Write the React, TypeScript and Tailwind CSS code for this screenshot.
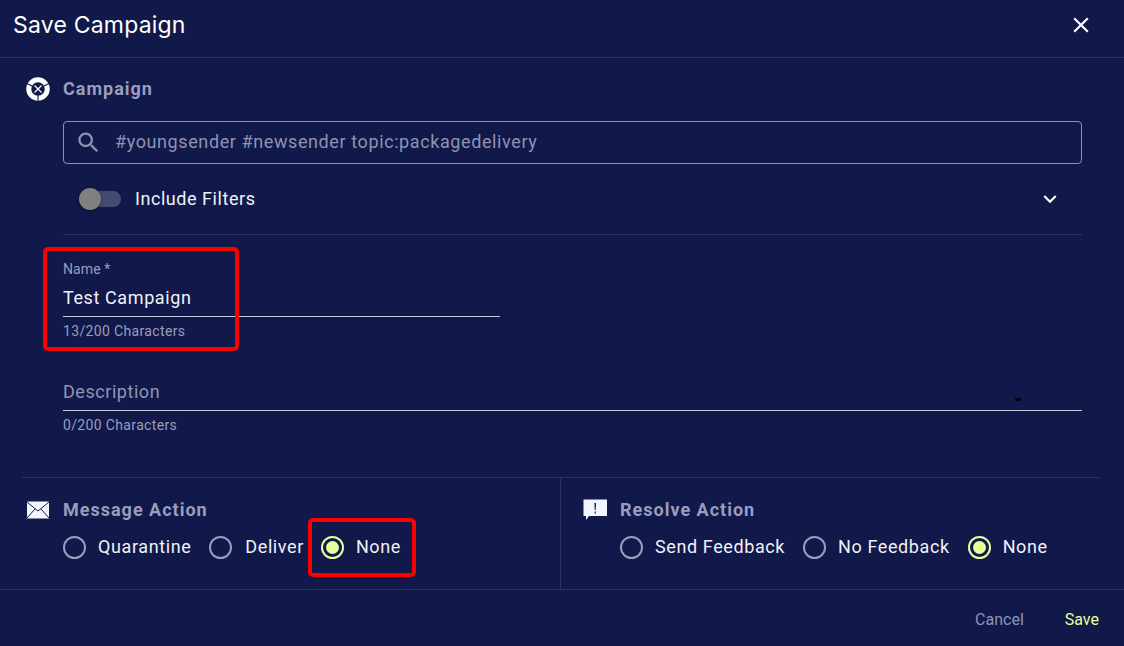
import React from "react";

function Radio({ label, checked, gap }: { label: string; checked?: boolean; gap: string }) {
  return (
    <div className={`flex items-center ${gap}`}>
      <span className={`flex h-[23px] w-[23px] items-center justify-center rounded-full border-2 ${checked ? "border-[#e6ff9c]" : "border-[#9a9dbb]"}`}>
        {checked && <span className="h-[13px] w-[13px] rounded-full bg-[#e6ff9c]" />}
      </span>
      <span className="text-[18px] leading-[24px] tracking-[0.6px] text-[#f0f1f8]">{label}</span>
    </div>
  );
}

export default function App() {
  return (
    <div className="flex h-[646px] w-[1124px] flex-col overflow-hidden bg-[#101949] font-['Roboto',sans-serif]">
      <header className="flex h-[58px] shrink-0 items-center justify-between border-b border-[#2b3360] pb-[7px] pl-[13px] pr-[30px]">
        <h1 className="font-['Inter',sans-serif] text-[23px] font-normal leading-[28px] tracking-[0.2px] text-white">Save Campaign</h1>
        <svg width="26" height="26" viewBox="0 0 24 24" fill="#fff">
          <path d="M19 6.41L17.59 5 12 10.59 6.41 5 5 6.41 10.59 12 5 17.59 6.41 19 12 13.41 17.59 19 19 17.59 13.41 12z" />
        </svg>
      </header>

      <section className="flex h-[419px] shrink-0 flex-col pr-[42px] pl-[26px]">
        <div className="mt-[19px] flex items-center gap-[13px]">
          <svg width="24" height="24" viewBox="0 0 24 24" className="shrink-0">
            <circle cx="12" cy="12" r="9.25" fill="none" stroke="#fff" strokeWidth="5" />
            <path d="M1 6.5 L6.5 9.2 M23 6.5 L17.5 9.2 M12 24 L12 18.5" stroke="#101949" strokeWidth="1.1" />
            <path d="M8.5 8.5 L15.5 15.5 M15.5 8.5 L8.5 15.5" stroke="#fff" strokeWidth="1.2" />
          </svg>
          <h2 className="text-[18px] font-bold leading-[20px] tracking-[1px] text-[#9a9dbd]">Campaign</h2>
        </div>

        <div className="ml-[37px] mt-[20px] flex h-[43px] items-center rounded-[4px] border border-[#8c90b3] pl-[11px]">
          <svg width="27" height="27" viewBox="0 0 24 24" fill="#9094b5">
            <path d="M15.5 14h-.79l-.28-.27C15.41 12.59 16 11.11 16 9.5 16 5.91 13.09 3 9.5 3S3 5.91 3 9.5 5.91 16 9.5 16c1.61 0 3.09-.59 4.23-1.57l.27.28v.79l5 4.99L20.49 19l-4.99-5zm-6 0C7.01 14 5 11.99 5 9.5S7.01 5 9.5 5 14 7.01 14 9.5 11.99 14 9.5 14z" />
          </svg>
          <span className="ml-[13px] pb-[2px] text-[18px] tracking-[0.6px] text-[#8f93b3]">#youngsender #newsender topic:packagedelivery</span>
        </div>

        <div className="ml-[37px] mt-[17px] flex h-[36px] items-center justify-between pl-[16px] pr-[19px]">
          <div className="flex items-center">
            <span className="relative h-[16px] w-[42px] rounded-full bg-[#444b73]">
              <span className="absolute left-0 top-[-3px] h-[22px] w-[22px] rounded-full bg-[#808080] shadow-[0_1px_3px_rgba(0,0,0,0.5)]" />
            </span>
            <span className="ml-[14px] pb-[2px] text-[18px] tracking-[0.55px] text-[#f0f1f8]">Include Filters</span>
          </div>
          <svg width="26" height="26" viewBox="0 0 24 24" fill="#fff">
            <path d="M16.59 8.59L12 13.17 7.41 8.59 6 10l6 6 6-6z" />
          </svg>
        </div>

        <div className="ml-[37px] mt-[17px] h-px bg-[#2b3360]" />

        <div className="relative ml-[37px] mt-[26px] w-[437px]">
          <div className="text-[14px] leading-[16px] tracking-[0.1px] text-[#9a9dbd]">Name *</div>
          <div className="mt-[9px] border-b border-[#c9cbdb] pb-[6px] text-[18px] leading-[24px] tracking-[0.6px] text-[#f0f1f8]">Test Campaign</div>
          <div className="mt-[6px] text-[14px] leading-[16px] tracking-[0.35px] text-[#9a9dbd]">13/200 Characters</div>
          <div className="absolute left-[-20px] top-[-14px] h-[104px] w-[196px] rounded-[5px] border-4 border-[#ff0000]" />
        </div>

        <div className="relative ml-[37px] mt-[41px]">
          <div className="border-b border-[#c9cbdb] pb-[6px] text-[18px] leading-[24px] tracking-[0.55px] text-[#9094b5]">Description</div>
          <div className="mt-[6px] text-[14px] leading-[16px] tracking-[0.35px] text-[#9a9dbd]">0/200 Characters</div>
          <span className="absolute left-[952px] top-[18px] h-[3px] w-[6px] rounded-full bg-black" />
        </div>
      </section>

      <section className="ml-[22px] mr-[24px] flex h-[112px] shrink-0 border-t border-[#2b3360]">
        <div className="w-[539px] border-r border-[#2b3360] pl-[5px] pt-[20px]">
          <div className="flex items-center gap-[14px]">
            <svg width="22" height="18" viewBox="0 0 22 18" className="shrink-0">
              <rect x="0" y="0.5" width="22" height="17" fill="#f4f6ff" />
              <path d="M0 1 L11 10 L22 1 M0 17 L8 8 M22 17 L14 8" fill="none" stroke="#101949" strokeWidth="1" />
            </svg>
            <h2 className="text-[18px] font-bold leading-[24px] tracking-[1px] text-[#9a9dbd]">Message Action</h2>
          </div>
          <div className="ml-[36px] mt-[13px] flex items-center">
            <Radio label="Quarantine" gap="gap-[12px]" />
            <div className="ml-[18px]"><Radio label="Deliver" gap="gap-[13px]" /></div>
            <div className="relative ml-[17px]">
              <Radio label="None" checked gap="gap-[12px]" />
              <div className="absolute left-[-13px] top-[-17px] h-[59px] w-[108px] rounded-[5px] border-4 border-[#ff0000]" />
            </div>
          </div>
        </div>
        <div className="flex-1 pl-[22px] pt-[20px]">
          <div className="flex items-center gap-[13px]">
            <svg width="24" height="22" viewBox="0 0 24 22" className="shrink-0">
              <path d="M0.5 0.5 H24 V17 H6 L3 21 V17 H0.5 Z" fill="#f4f6ff" />
              <path d="M11.4 4 H13 L12.7 11 H11.7 Z M11.6 12.5 H12.8 V14.5 H11.6 Z" fill="#101949" />
            </svg>
            <h2 className="text-[18px] font-bold leading-[24px] tracking-[1px] text-[#9a9dbd]">Resolve Action</h2>
          </div>
          <div className="ml-[37px] mt-[13px] flex items-center">
            <Radio label="Send Feedback" gap="gap-[12px]" />
            <div className="ml-[18px]"><Radio label="No Feedback" gap="gap-[12px]" /></div>
            <div className="ml-[18px]"><Radio label="None" checked gap="gap-[12px]" /></div>
          </div>
        </div>
      </section>

      <footer className="flex flex-1 items-center justify-end border-t border-[#2b3360] pr-[25px] pt-[3px] text-[16px]">
        <span className="text-[#8f93b3]">Cancel</span>
        <span className="ml-[41px] text-[#e6ff9c]">Save</span>
      </footer>
    </div>
  );
}
